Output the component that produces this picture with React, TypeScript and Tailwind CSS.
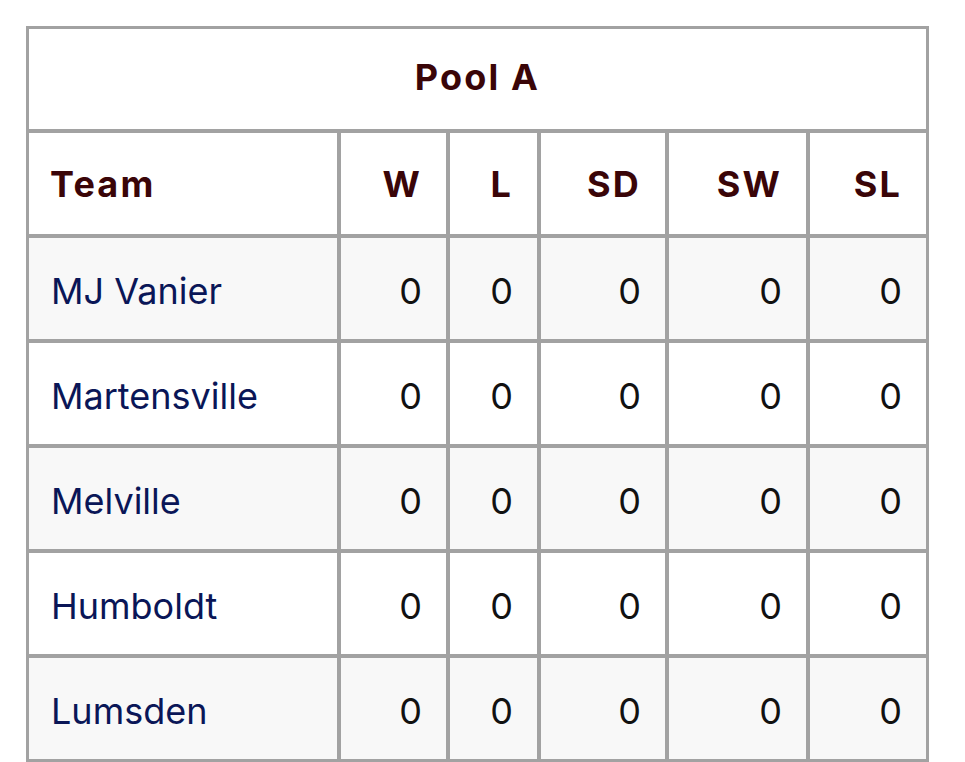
import React from "react";

const teams = ["MJ Vanier", "Martensville", "Melville", "Humboldt", "Lumsden"];
const heads = ["W", "L", "SD", "SW", "SL"];

export default function App() {
  return (
    <div className="w-[965px] h-[762px] bg-white overflow-hidden" style={{ fontFamily: "Inter, 'Liberation Sans', sans-serif" }}>
      <div className="ml-[26px] mt-[26px] w-[903px] border-[3px] border-b-0 border-[#a2a2a2] bg-[#a2a2a2]">
        <div className="grid grid-cols-[308px_105px_87px_124px_137px_116px] gap-[4px]">
          <div className="col-span-6 h-[100px] bg-white flex items-center justify-center pb-[4px] text-[36px] font-bold tracking-[0.06em] text-[#3a0508]">
            Pool A
          </div>
          <div className="h-[101px] bg-white flex items-center pl-[21px] text-[36px] font-bold tracking-[0.06em] text-[#3a0508]">Team</div>
          {heads.map((h) => (
            <div key={h} className="h-[101px] bg-white flex items-center justify-end pr-[24px] text-[36px] font-bold tracking-[0.06em] text-[#3a0508]">
              {h}
            </div>
          ))}
          {teams.map((t, i) => {
            const bg = i % 2 === 0 ? "bg-[#f8f8f8]" : "bg-white";
            return (
              <React.Fragment key={t}>
                <div className={`h-[101px] ${bg} flex items-center pl-[22px] pt-[4px] text-[36px] text-[#0a1657]`}>{t}</div>
                {heads.map((h) => (
                  <div key={h} className={`h-[101px] ${bg} flex items-center justify-end pr-[24px] pt-[4px] text-[36px] text-[#111111]`}>
                    0
                  </div>
                ))}
              </React.Fragment>
            );
          })}
        </div>
        <div className="h-[3px] bg-[#a2a2a2]"></div>
      </div>
    </div>
  );
}
